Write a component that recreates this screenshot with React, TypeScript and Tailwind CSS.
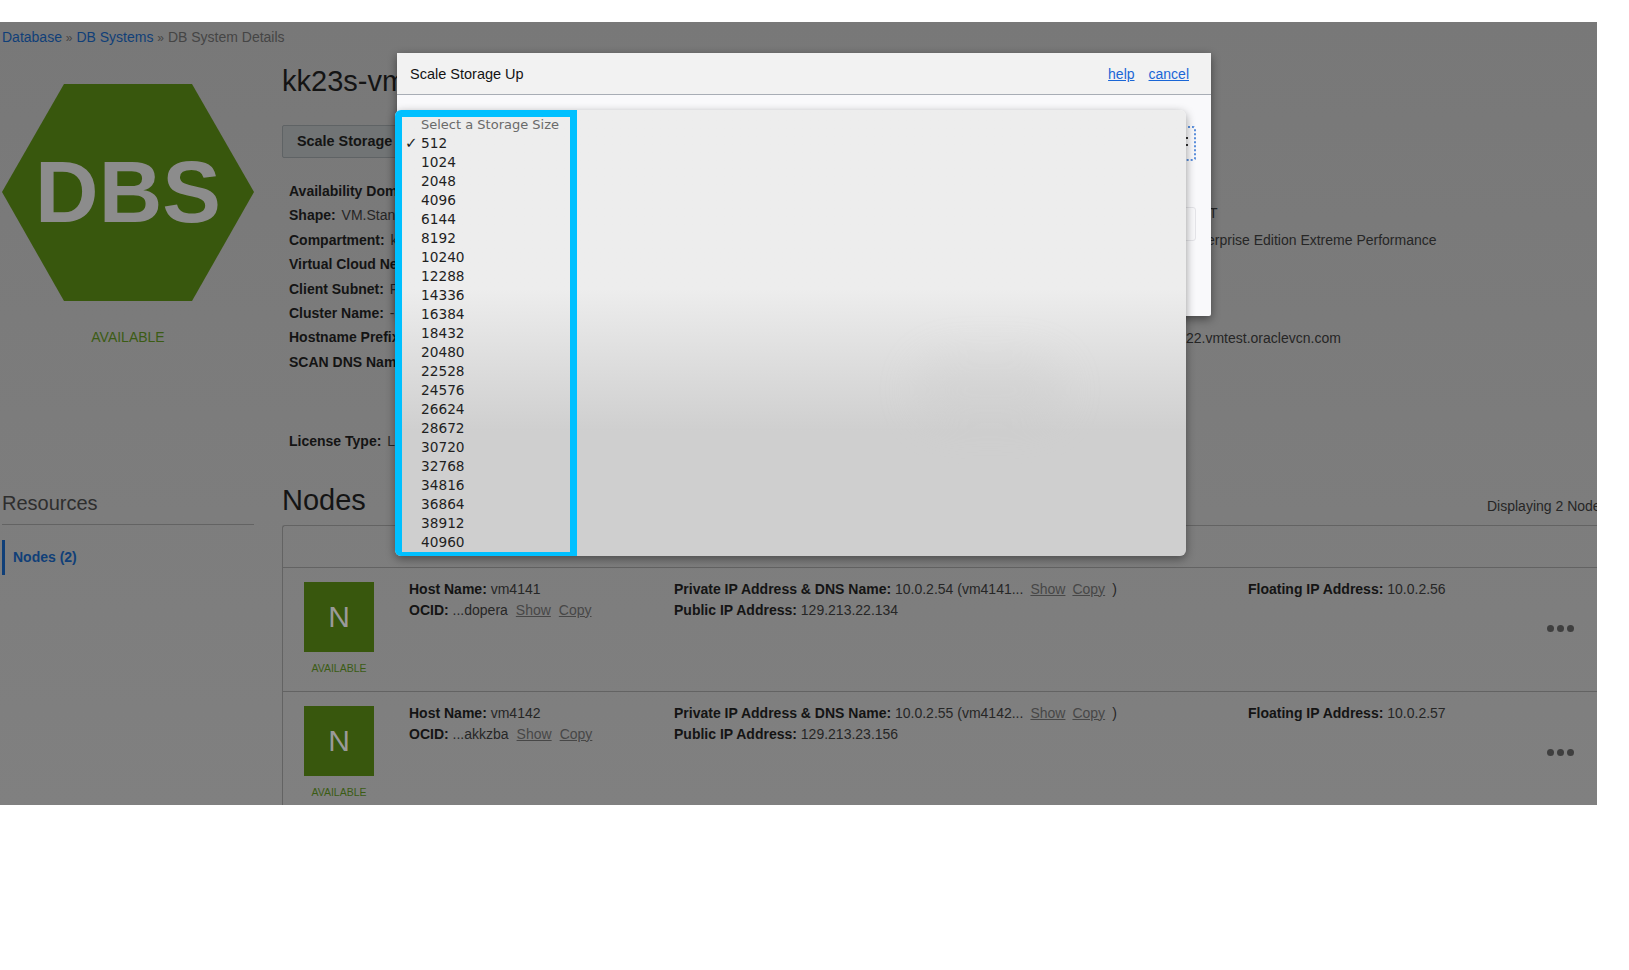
const sizes = [512, 1024, 2048, 4096, 6144, 8192, 10240, 12288, 14336, 16384, 18432, 20480, 22528, 24576, 26624, 28672, 30720, 32768, 34816, 36864, 38912, 40960];

const fields = [
  { label: "Availability Domain:", value: "" },
  { label: "Shape:", value: "VM.Standard" },
  { label: "Compartment:", value: "kk" },
  { label: "Virtual Cloud Network:", value: "" },
  { label: "Client Subnet:", value: "Public" },
  { label: "Cluster Name:", value: "-" },
  { label: "Hostname Prefix:", value: "" },
  { label: "SCAN DNS Name:", value: "" },
];

const nodes = [
  { host: "vm4141", ocid: "...dopera", ip: "10.0.2.54 (vm4141...", pub: "129.213.22.134", float: "10.0.2.56" },
  { host: "vm4142", ocid: "...akkzba", ip: "10.0.2.55 (vm4142...", pub: "129.213.23.156", float: "10.0.2.57" },
];

function NodeRow({ node }: { node: (typeof nodes)[number] }) {
  return (
    <div className="flex h-[124px] border-t border-[#636363] text-[14px] leading-[21px] text-[#262626]">
      <div className="ml-[21px] mt-[14px] flex w-[70px] shrink-0 flex-col items-center">
        <div className="flex h-[70px] w-[70px] items-center justify-center bg-[#38570d] text-[30px] text-[#9a9a9a]">N</div>
        <div className="mt-[9px] whitespace-nowrap text-[10.5px] leading-[14px] text-[#3b5c14]">AVAILABLE</div>
      </div>
      <div className="ml-[35px] mt-[11px] w-[265px] shrink-0">
        <div><b className="font-bold text-[#141414]">Host Name:</b> {node.host}</div>
        <div>
          <b className="font-bold text-[#141414]">OCID:</b> {node.ocid}
          <span className="ml-[8px] text-[#474747] underline">Show</span>
          <span className="ml-[8px] text-[#474747] underline">Copy</span>
        </div>
      </div>
      <div className="mt-[11px] w-[574px] shrink-0">
        <div>
          <b className="font-bold text-[#141414]">Private IP Address &amp; DNS Name:</b> {node.ip}
          <span className="ml-[7px] text-[#474747] underline">Show</span>
          <span className="ml-[7px] text-[#474747] underline">Copy</span>
          <span className="ml-[7px]">)</span>
        </div>
        <div><b className="font-bold text-[#141414]">Public IP Address:</b> {node.pub}</div>
      </div>
      <div className="mt-[11px] w-[299px] shrink-0">
        <b className="font-bold text-[#141414]">Floating IP Address:</b> {node.float}
      </div>
      <div className="mt-[57px] flex h-[7px] gap-[3px]">
        <span className="h-[7px] w-[7px] rounded-full bg-[#3f3f3f]" />
        <span className="h-[7px] w-[7px] rounded-full bg-[#3f3f3f]" />
        <span className="h-[7px] w-[7px] rounded-full bg-[#3f3f3f]" />
      </div>
    </div>
  );
}

export default function App() {
  return (
    <div className="h-[970px] w-[1629px] overflow-hidden bg-white pt-[22px] font-['Liberation_Sans',Arial,sans-serif]">
      <div className="relative h-[783px] w-[1597px] overflow-hidden bg-gradient-to-b from-[#787878] to-[#808080]">
        <div className="pl-[2px] pt-[6px] text-[14px] leading-[18px] text-[#454545]">
          <span className="text-[#103f78]">Database</span> <span className="text-[12px]">»</span> <span className="text-[#103f78]">DB Systems</span> <span className="text-[12px]">»</span> DB System Details
        </div>

        <div className="flex pl-[2px]">
          <div className="w-[252px] shrink-0">
            <div className="mt-[37px] h-[217px] w-[252px]">
              <svg viewBox="0 0 252 217" className="h-full w-full">
                <polygon points="0,108 62,0 190,0 252,108 190,217 62,217" fill="#38570d" />
              </svg>
            </div>
            <div className="relative -mt-[159px] h-[100px] text-center text-[88px] font-bold leading-[100px] text-[#8c8c8c]">DBS</div>
            <div className="mt-[86px] text-center text-[14px] leading-[18px] text-[#3b5c14]">AVAILABLE</div>
            <div className="mt-[144px] border-b border-[#636363] pb-[8px] text-[20px] leading-[26px] text-[#2e2e2e]">Resources</div>
            <div className="mt-[15px] h-[35px] border-l-[3px] border-[#103f78] pl-[8px] text-[14px] font-bold leading-[35px] text-[#103f78]">Nodes (2)</div>
          </div>

          <div className="ml-[28px] min-w-0 flex-1">
            <div className="mt-[16px] text-[29px] leading-[36px] text-[#141414]">kk23s-vm4141</div>
            <div className="mt-[26px] flex h-[33px] w-[200px] items-center rounded-[2px] border border-[#5f6365] bg-[#717475] pl-[14px] text-[14.4px] font-bold text-[#141414]">Scale Storage</div>
            <div className="ml-[7px] mt-[21px] text-[14px] leading-[24.4px] text-[#262626]">
              {fields.map((f) => (
                <div key={f.label}><b className="font-bold text-[#141414]">{f.label}</b> <span className="ml-[2px]">{f.value}</span></div>
              ))}
              <div className="mt-[55px]"><b className="font-bold text-[#141414]">License Type:</b> <span className="ml-[2px]">License Included</span></div>
            </div>
            <div className="flex items-end justify-between">
              <div className="mt-[28px] text-[29px] leading-[36px] text-[#141414]">Nodes</div>
              <div className="mb-[3px] w-[110px] whitespace-nowrap text-[14px] leading-[18px] text-[#262626]">Displaying 2 Nodes</div>
            </div>
            <div className="mt-[7px] rounded-tl-[3px] border-l border-t border-[#636363]">
              <div className="h-[41px]" />
              <NodeRow node={nodes[0]} />
              <NodeRow node={nodes[1]} />
            </div>
          </div>
        </div>

        {/* text of the page that shows to the right of the modal */}
        <div className="absolute left-[1209px] top-[182px] text-[14px] leading-[18px] text-[#262626]">T</div>
        <div className="absolute left-[1207px] top-[209px] whitespace-nowrap text-[14px] leading-[18px] text-[#262626]">erprise Edition Extreme Performance</div>
        <div className="absolute left-[1186px] top-[307px] whitespace-nowrap text-[14px] leading-[18px] text-[#262626]">22.vmtest.oraclevcn.com</div>

        {/* modal */}
        <div className="absolute left-[397px] top-[31px] h-[263px] w-[814px] rounded-[2px] bg-[#f9f9fb] shadow-[0_3px_10px_rgba(0,0,0,0.45)]">
          <div className="flex h-[42px] items-center justify-between border-b border-[#a8adb5] bg-[#f2f2f2] pl-[13px] pr-[22px] pt-[2px] text-[14px]">
            <span className="text-[14.5px] text-[#141414]">Scale Storage Up</span>
            <span className="flex gap-[14px] text-[#1a66d6] underline">
              <span>help</span>
              <span>cancel</span>
            </span>
          </div>
          <div className="absolute left-[700px] top-[73px] h-[35px] w-[99px] rounded-[3px] border-2 border-dotted border-[#5b8fdc]">
            <span className="absolute right-[6px] top-[9px] h-[2px] w-[3px] bg-[#333333]" />
            <span className="absolute right-[6px] top-[16px] h-[2px] w-[3px] bg-[#333333]" />
          </div>
          <div className="absolute left-[700px] top-[154px] h-[34px] w-[99px] rounded-[3px] border border-[#e4e4e8]" />
        </div>

        {/* native select popup */}
        <div className="absolute left-[395px] top-[88px] h-[446px] w-[791px] overflow-hidden rounded-[6px] bg-gradient-to-b from-[#ededed] from-[40%] to-[#cfcfcf] to-[72%] shadow-[0_3px_10px_rgba(0,0,0,0.4)]">
          <div className="absolute left-[520px] top-[245px] h-[70px] w-[150px] rounded-full bg-[#c4c4c4] opacity-20 blur-[20px]" />
          <div className="relative h-[449px] w-[182px] border-[7px] border-[#00c0ff] pl-[19px] font-['DejaVu_Sans',sans-serif] text-[13.7px] leading-[19px] text-[#1f1f1f]">
            <div className="-mt-[2px] whitespace-nowrap text-[13px] text-[#6a6a6a]">Select a Storage Size</div>
            {sizes.map((s, i) => (
              <div key={s} className="relative">
                {i === 0 && <span className="absolute -left-[16px] top-0 text-[15px]">✓</span>}
                {s}
              </div>
            ))}
          </div>
        </div>
      </div>
    </div>
  );
}
